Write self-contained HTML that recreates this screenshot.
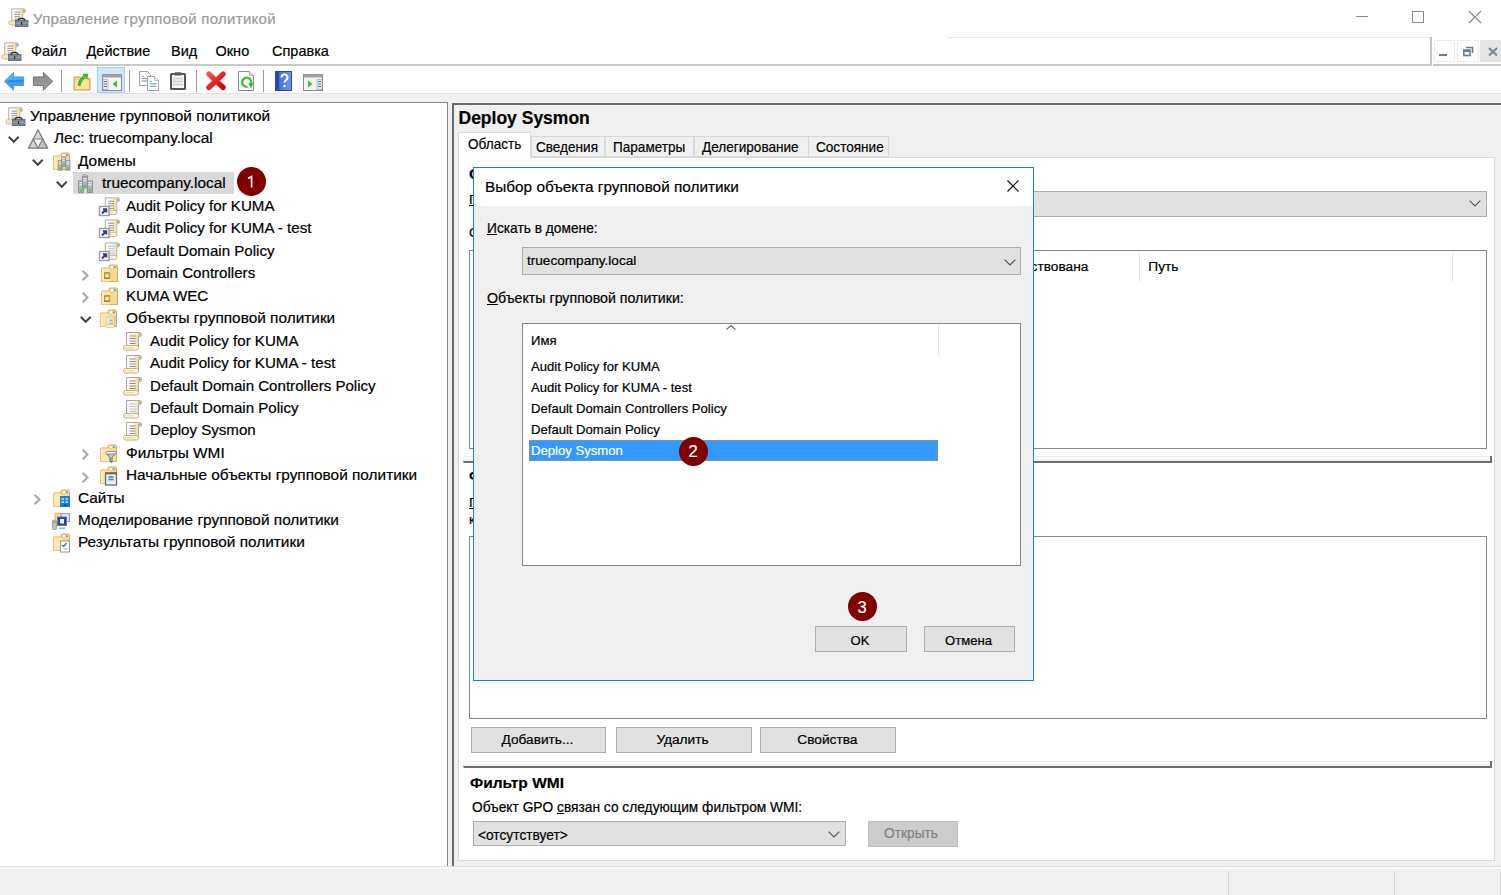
<!DOCTYPE html>
<html><head><meta charset="utf-8">
<style>
*{box-sizing:border-box;margin:0;padding:0}
html,body{width:1501px;height:895px;overflow:hidden;background:#f0f0f0;font-family:"Liberation Sans",sans-serif;color:#000}
.a{position:absolute}
.t{position:absolute;white-space:nowrap;line-height:1;-webkit-text-stroke:0.2px currentColor}
svg{position:absolute;overflow:visible}
</style></head><body>
<div class="a" style="left:0px;top:0px;width:1501px;height:37px;background:#fff;"></div>
<svg style="left:8px;top:8px" width="20" height="20" viewBox="0 0 20 20"><g transform="translate(0.5 -0.5) scale(0.92)"><path d="M3.5 1.5h13a2 2 0 0 1 0 4h-1v10.5h-12z" fill="#fffbea" stroke="#a8a8a8" stroke-width="1"/><rect x="11.5" y="2.5" width="3.5" height="13" fill="#f3df9a" opacity="0.8"/><circle cx="16.5" cy="3.5" r="1.6" fill="#c9b173"/><path d="M6.5 5h6M6.5 7.5h6M6.5 10h6M6.5 12.5h6" stroke="#8886a8" stroke-width="1"/><rect x="0.5" y="14.5" width="15" height="4.5" rx="2.2" fill="#fffbea" stroke="#c3ad72" stroke-width="1"/><rect x="2" y="16" width="9" height="1.5" fill="#f3df9a"/></g><rect x="7.5" y="12.3" width="12.5" height="6.3" fill="#7a8594" stroke="#5c6470" stroke-width="0.8"/><path d="M10 12.6a3.5 2.2 0 0 1 7 0" fill="none" stroke="#2a2a2a" stroke-width="1.1"/><path d="M8.5 15.3h11" stroke="#a9b1bb" stroke-width="0.9"/><rect x="13" y="14.3" width="1.2" height="2.5" fill="#222"/></svg>
<div class="t" style="left:33.00px;top:10.50px;font-size:15px;color:#9a9a9a;letter-spacing:0.3px;">Управление групповой политикой</div>
<div class="a" style="left:1356px;top:16px;width:12px;height:1px;background:#8a8a8a;"></div>
<div class="a" style="left:1412px;top:11px;width:12px;height:12px;border:1px solid #8a8a8a;"></div>
<svg style="left:1469px;top:11px" width="12" height="12" viewBox="0 0 12 12"><path d="M0 0L12 12M12 0L0 12" stroke="#8a8a8a" stroke-width="1.1"/></svg>
<div class="a" style="left:0px;top:37px;width:1501px;height:28px;background:#fff;"></div>
<div class="a" style="left:947px;top:37px;width:485px;height:1px;background:#e6e6e6;"></div>
<div class="a" style="left:0px;top:64px;width:1432px;height:1.5px;background:#c9c9c9;"></div>
<div class="a" style="left:1430px;top:37px;width:1.5px;height:28px;background:#c3c3c3;"></div>
<div class="a" style="left:1433px;top:64px;width:68px;height:1.5px;background:#c9c9c9;"></div>
<svg style="left:1px;top:42px" width="20" height="20" viewBox="0 0 20 20"><g transform="translate(0.5 -0.5) scale(0.92)"><path d="M3.5 1.5h13a2 2 0 0 1 0 4h-1v10.5h-12z" fill="#fffbea" stroke="#a8a8a8" stroke-width="1"/><rect x="11.5" y="2.5" width="3.5" height="13" fill="#f3df9a" opacity="0.8"/><circle cx="16.5" cy="3.5" r="1.6" fill="#c9b173"/><path d="M6.5 5h6M6.5 7.5h6M6.5 10h6M6.5 12.5h6" stroke="#8886a8" stroke-width="1"/><rect x="0.5" y="14.5" width="15" height="4.5" rx="2.2" fill="#fffbea" stroke="#c3ad72" stroke-width="1"/><rect x="2" y="16" width="9" height="1.5" fill="#f3df9a"/></g><rect x="7.5" y="12.3" width="12.5" height="6.3" fill="#7a8594" stroke="#5c6470" stroke-width="0.8"/><path d="M10 12.6a3.5 2.2 0 0 1 7 0" fill="none" stroke="#2a2a2a" stroke-width="1.1"/><path d="M8.5 15.3h11" stroke="#a9b1bb" stroke-width="0.9"/><rect x="13" y="14.3" width="1.2" height="2.5" fill="#222"/></svg>
<div class="t" style="left:31.00px;top:43.73px;font-size:14.5px;">Файл</div>
<div class="t" style="left:86.50px;top:43.73px;font-size:14.5px;">Действие</div>
<div class="t" style="left:171.00px;top:43.73px;font-size:14.5px;">Вид</div>
<div class="t" style="left:215.50px;top:43.73px;font-size:14.5px;">Окно</div>
<div class="t" style="left:272.00px;top:43.73px;font-size:14.5px;">Справка</div>
<div class="a" style="left:1433.5px;top:40px;width:21px;height:21.5px;background:#fff;border:1px solid #ececec;"></div>
<div class="a" style="left:1439px;top:53.5px;width:7.5px;height:2px;background:#6e7d8c;"></div>
<div class="a" style="left:1457px;top:40px;width:21.5px;height:21.5px;background:#fff;border:1px solid #ececec;"></div>
<svg style="left:1463px;top:46px" width="11" height="11" viewBox="0 0 11 11"><path d="M3 1.5H9.5V7" fill="none" stroke="#6e7d8c" stroke-width="1.6"/><rect x="0.8" y="4" width="6.2" height="5.5" fill="none" stroke="#6e7d8c" stroke-width="1.6"/><rect x="0.8" y="4" width="6.2" height="2" fill="#6e7d8c"/></svg>
<div class="a" style="left:1480px;top:40px;width:22px;height:21.5px;background:#e5e5e5;"></div>
<svg style="left:1487.5px;top:47px" width="10" height="9.5" viewBox="0 0 10 9.5"><path d="M1 1L9 8.5M9 1L1 8.5" stroke="#7d8a98" stroke-width="2.2"/></svg>
<div class="a" style="left:0px;top:66px;width:1501px;height:27px;background:#fff;"></div>
<div class="a" style="left:0px;top:93px;width:1501px;height:9px;background:#f0f0f0;border:none;border-top:1px solid #e4e4e4"></div>
<svg style="left:4px;top:72px" width="20" height="18" viewBox="0 0 20 18"><defs><linearGradient id="gb" x1="0" y1="0" x2="0" y2="1"><stop offset="0" stop-color="#5cc0ff"/><stop offset="1" stop-color="#2a90e8"/></linearGradient></defs><path d="M0.4 9.2L9.6 0.4V4.9H19.6V13.5H9.6V18.2z" fill="url(#gb)" stroke="#3a8ad8" stroke-width="0.8"/><path d="M3 9.2h16" stroke="#0b6fd6" stroke-width="2" opacity="0.5"/></svg>
<svg style="left:33px;top:72px" width="20" height="18" viewBox="0 0 20 18"><defs><linearGradient id="gg" x1="0" y1="0" x2="0" y2="1"><stop offset="0" stop-color="#8a8a8a"/><stop offset="1" stop-color="#9c9c9c"/></linearGradient></defs><path d="M19.6 9.2L10.4 0.4V4.9H0.4V13.5H10.4V18.2z" fill="url(#gg)" stroke="#6a6a6a" stroke-width="0.9"/></svg>
<div class="a" style="left:61px;top:69.5px;width:1.2px;height:22.5px;background:#9a9a9a;"></div>
<div class="a" style="left:128.5px;top:69.5px;width:1.2px;height:22.5px;background:#9a9a9a;"></div>
<div class="a" style="left:196px;top:69.5px;width:1.2px;height:22.5px;background:#9a9a9a;"></div>
<div class="a" style="left:263px;top:69.5px;width:1.2px;height:22.5px;background:#9a9a9a;"></div>
<svg style="left:73px;top:71px" width="18" height="20" viewBox="0 0 18 20"><path d="M1 6h6l1.5 1.5H17V19H1z" fill="#f3d27e" stroke="#c9a24c" stroke-width="1"/><path d="M2 9h14v9H2z" fill="#f8e3a4"/><path d="M5 14C6 9 8 6 11 4.5l-1-1.5h5l-1 4.5-1.2-1.5C10 8 8 11 7 15z" fill="#3bbf2e" stroke="#2a9a20" stroke-width="0.6"/></svg>
<div class="a" style="left:97px;top:67px;width:28px;height:26px;background:#cce8ff;border:1px solid #99d1ff;"></div>
<svg style="left:102px;top:74px" width="20" height="17" viewBox="0 0 20 17"><rect x="0.5" y="0.5" width="19" height="16" fill="#f4f4f4" stroke="#8a8a8a" stroke-width="1"/><rect x="0.5" y="0.5" width="19" height="3" fill="#9ea3a8"/><path d="M1 5.5h5v10H1z" fill="#e8ecf0" stroke="#9a9a9a" stroke-width="0.6"/><path d="M2 7.5h3M2 10h3M2 12.5h3" stroke="#3a78c8" stroke-width="1"/><path d="M15 6.5v7l-4.5-3.5z" fill="#3cbf2f"/></svg>
<svg style="left:139px;top:71px" width="21" height="20" viewBox="0 0 21 20"><path d="M0.5 0.5h8l3 3v11h-11z" fill="#fff" stroke="#a3a3a3" stroke-width="1"/><path d="M2.7 5.2h2M2.7 7.6h6.5M2.7 10h6.5" stroke="#4a86d0" stroke-width="0.9"/><path d="M8.5 5.5h7l4 4v10h-11z" fill="#fff" stroke="#a3a3a3" stroke-width="1"/><path d="M15.5 5.5v4h4" fill="#eee" stroke="#b5b5b5" stroke-width="0.8"/><path d="M10.7 10.3h2M10.7 12.8h7M10.7 15.3h7" stroke="#4a86d0" stroke-width="0.9"/></svg>
<svg style="left:170px;top:72px" width="16" height="18" viewBox="0 0 16 18"><rect x="1" y="2" width="14" height="15" rx="0.6" fill="#f4f4f4" stroke="#555" stroke-width="2"/><rect x="4.5" y="0.3" width="7" height="3.2" rx="0.8" fill="#5a5a5a"/><path d="M3 6.5h10M3 9.5h10M3 12.5h10" stroke="#cfcfcf" stroke-width="1.6"/></svg>
<svg style="left:206px;top:71px" width="20" height="19" viewBox="0 0 20 19"><defs><linearGradient id="gr" x1="0" y1="0" x2="1" y2="1"><stop offset="0" stop-color="#ff4d4d"/><stop offset="1" stop-color="#d00000"/></linearGradient></defs><path d="M2.8 3L17.2 16.5M17.2 3L2.8 16.5" stroke="url(#gr)" stroke-width="5.2" stroke-linecap="round"/></svg>
<svg style="left:238px;top:71px" width="16" height="20" viewBox="0 0 16 20"><path d="M0.5 0.5h11l4 4v15h-15z" fill="#fafafa" stroke="#8e8e8e"/><path d="M11.5 0.5v4h4" fill="#e0e0e0" stroke="#aaa" stroke-width="0.8"/><path d="M9.5 15.8a4.6 4.6 0 1 1 3.2-2.2" fill="none" stroke="#3fc236" stroke-width="2.3"/><path d="M10.2 12.2l5 0.6-2.2 4.3z" fill="#2fae27"/></svg>
<svg style="left:275px;top:71px" width="17" height="20" viewBox="0 0 17 20"><defs><linearGradient id="gh" x1="0" y1="0" x2="1" y2="0"><stop offset="0" stop-color="#3a66d0"/><stop offset="1" stop-color="#6f98ec"/></linearGradient></defs><rect x="0.5" y="0.5" width="16" height="19" fill="url(#gh)" stroke="#2a4a9a"/><rect x="0.5" y="0.5" width="3.5" height="19" fill="#2448a8"/><path d="M6.5 6.5a3 3 0 1 1 4.5 2.5c-1 0.6-1.5 1.2-1.5 2.6" fill="none" stroke="#fff" stroke-width="1.9"/><circle cx="9.5" cy="15" r="1.2" fill="#fff"/></svg>
<svg style="left:303px;top:74px" width="20" height="17" viewBox="0 0 20 17"><rect x="0.5" y="0.5" width="19" height="16" fill="#f4f4f4" stroke="#8a8a8a" stroke-width="1"/><rect x="0.5" y="0.5" width="19" height="3" fill="#9ea3a8"/><path d="M14 5.5h5v10h-5z" fill="#e8ecf0" stroke="#9a9a9a" stroke-width="0.6"/><path d="M15 7.5h3M15 10h3M15 12.5h3" stroke="#3a78c8" stroke-width="1"/><path d="M5 6.5v7l4.5-3.5z" fill="#3cbf2f"/></svg>
<div class="a" style="left:-1px;top:102px;width:449px;height:766px;background:#fff;border:1px solid #828790;"></div>
<svg style="left:4.5px;top:106.9px" width="20" height="20" viewBox="0 0 20 20"><g transform="translate(0.5 -0.5) scale(0.92)"><path d="M3.5 1.5h13a2 2 0 0 1 0 4h-1v10.5h-12z" fill="#fffbea" stroke="#a8a8a8" stroke-width="1"/><rect x="11.5" y="2.5" width="3.5" height="13" fill="#f3df9a" opacity="0.8"/><circle cx="16.5" cy="3.5" r="1.6" fill="#c9b173"/><path d="M6.5 5h6M6.5 7.5h6M6.5 10h6M6.5 12.5h6" stroke="#8886a8" stroke-width="1"/><rect x="0.5" y="14.5" width="15" height="4.5" rx="2.2" fill="#fffbea" stroke="#c3ad72" stroke-width="1"/><rect x="2" y="16" width="9" height="1.5" fill="#f3df9a"/></g><rect x="7.5" y="12.3" width="12.5" height="6.3" fill="#7a8594" stroke="#5c6470" stroke-width="0.8"/><path d="M10 12.6a3.5 2.2 0 0 1 7 0" fill="none" stroke="#2a2a2a" stroke-width="1.1"/><path d="M8.5 15.3h11" stroke="#a9b1bb" stroke-width="0.9"/><rect x="13" y="14.3" width="1.2" height="2.5" fill="#222"/></svg>
<div class="t" style="left:30.00px;top:107.86px;font-size:15.4px;">Управление групповой политикой</div>
<svg style="left:8px;top:136.04999999999998px" width="12" height="7" viewBox="0 0 12 7"><path d="M0.8 0.8L5.75 5.75L10.7 0.8" fill="none" stroke="#444" stroke-width="2"/></svg>
<svg style="left:28px;top:129.35px" width="20" height="20" viewBox="0 0 20 20"><defs><linearGradient id="gf" x1="0" y1="0" x2="1" y2="1"><stop offset="0" stop-color="#f2f2f2"/><stop offset="1" stop-color="#b5b5b5"/></linearGradient></defs><path d="M10 0.8L19.5 19.2H0.5z" fill="url(#gf)" stroke="#7c7c7c" stroke-width="1.3"/><path d="M5.25 10h9.5L10 19.2z" fill="#f7f7f7" stroke="#7c7c7c" stroke-width="1.2"/></svg>
<div class="t" style="left:54.00px;top:130.31px;font-size:15.4px;">Лес: truecompany.local</div>
<svg style="left:32px;top:158.5px" width="12" height="7" viewBox="0 0 12 7"><path d="M0.8 0.8L5.75 5.75L10.7 0.8" fill="none" stroke="#444" stroke-width="2"/></svg>
<svg style="left:52px;top:151.8px" width="20" height="20" viewBox="0 0 20 20"><path d="M9 4V2.5a1.5 1.5 0 0 1 1.5-1.5h5.5a1.5 1.5 0 0 1 1.5 1.5V17.5H1.5V5a1 1 0 0 1 1-1z" fill="#f3d68a" stroke="#d2ad5c" stroke-width="1"/><rect x="10.5" y="2.2" width="5.8" height="1.8" rx="0.9" fill="#fff"/><ellipse cx="14.8" cy="3.1" rx="1.4" ry="0.9" fill="#4a90e2"/><path d="M10.5 5.5h6.5v11.5h-6.5z" fill="#f8db8e"/><path d="M2 4.5h7l1 1.5v11.5H2z" fill="#fbe7ad"/><path d="M2.2 5v12" stroke="#fff3cf" stroke-width="0.9"/><g transform="translate(4 2.5) scale(0.85)"><rect x="2.5" y="7" width="5" height="11.5" fill="#aeb4ba" stroke="#7f878f" stroke-width="0.8"/><rect x="3.3" y="8" width="3.4" height="1.2" fill="#e9ecef"/><rect x="3.3" y="10.2" width="3.4" height="1.2" fill="#e9ecef"/><rect x="4.0" y="15.5" width="2.2" height="2" fill="#35d12f"/><rect x="6.5" y="3" width="5" height="11" fill="#aeb4ba" stroke="#7f878f" stroke-width="0.8"/><rect x="7.3" y="4" width="3.4" height="1.2" fill="#e9ecef"/><rect x="7.3" y="6.2" width="3.4" height="1.2" fill="#e9ecef"/><rect x="8.0" y="11" width="2.2" height="2" fill="#35d12f"/><rect x="11.5" y="7" width="5" height="11.5" fill="#aeb4ba" stroke="#7f878f" stroke-width="0.8"/><rect x="12.3" y="8" width="3.4" height="1.2" fill="#e9ecef"/><rect x="12.3" y="10.2" width="3.4" height="1.2" fill="#e9ecef"/><rect x="13.0" y="15.5" width="2.2" height="2" fill="#35d12f"/></g></svg>
<div class="t" style="left:78.00px;top:152.76px;font-size:15.4px;">Домены</div>
<div class="a" style="left:73px;top:172px;width:160.5px;height:22px;background:#d9d9d9;"></div>
<svg style="left:56px;top:180.95px" width="12" height="7" viewBox="0 0 12 7"><path d="M0.8 0.8L5.75 5.75L10.7 0.8" fill="none" stroke="#444" stroke-width="2"/></svg>
<svg style="left:76px;top:174.25px" width="20" height="20" viewBox="0 0 20 20"><g transform="translate(0 0)"><rect x="2.5" y="7" width="5" height="11.5" fill="#aeb4ba" stroke="#7f878f" stroke-width="0.8"/><rect x="3.3" y="8" width="3.4" height="1.2" fill="#e9ecef"/><rect x="3.3" y="10.2" width="3.4" height="1.2" fill="#e9ecef"/><rect x="4.0" y="15.5" width="2.2" height="2" fill="#35d12f"/><rect x="6.5" y="3" width="5" height="11" fill="#aeb4ba" stroke="#7f878f" stroke-width="0.8"/><rect x="7.3" y="4" width="3.4" height="1.2" fill="#e9ecef"/><rect x="7.3" y="6.2" width="3.4" height="1.2" fill="#e9ecef"/><rect x="8.0" y="11" width="2.2" height="2" fill="#35d12f"/><rect x="11.5" y="7" width="5" height="11.5" fill="#aeb4ba" stroke="#7f878f" stroke-width="0.8"/><rect x="12.3" y="8" width="3.4" height="1.2" fill="#e9ecef"/><rect x="12.3" y="10.2" width="3.4" height="1.2" fill="#e9ecef"/><rect x="13.0" y="15.5" width="2.2" height="2" fill="#35d12f"/></g><path d="M7 0.8h4l1 1.7h-6z" fill="#ccd3da" stroke="#7f878f" stroke-width="0.6"/></svg>
<div class="t" style="left:102.00px;top:175.21px;font-size:15.4px;">truecompany.local</div>
<svg style="left:99px;top:196.7px" width="20" height="20" viewBox="0 0 20 20"><g transform="translate(3 -0.5) scale(0.95)"><path d="M3.5 1.5h13a2 2 0 0 1 0 4h-1v10.5h-12z" fill="#fffbea" stroke="#a8a8a8" stroke-width="1"/><rect x="11.5" y="2.5" width="3.5" height="13" fill="#f3df9a" opacity="0.8"/><circle cx="16.5" cy="3.5" r="1.6" fill="#c9b173"/><path d="M6.5 5h6M6.5 7.5h6M6.5 10h6M6.5 12.5h6" stroke="#8886a8" stroke-width="1"/><rect x="0.5" y="14.5" width="15" height="4.5" rx="2.2" fill="#fffbea" stroke="#c3ad72" stroke-width="1"/><rect x="2" y="16" width="9" height="1.5" fill="#f3df9a"/></g><rect x="0.5" y="9.5" width="9.5" height="9" fill="#fff" stroke="#9c9c9c" stroke-width="1.4"/><path d="M3 16.5l4-4M4 12.2h3.3v3.3" fill="none" stroke="#3737a0" stroke-width="2"/></svg>
<div class="t" style="left:126.00px;top:197.92px;font-size:15.1px;">Audit Policy for KUMA</div>
<svg style="left:99px;top:219.15px" width="20" height="20" viewBox="0 0 20 20"><g transform="translate(3 -0.5) scale(0.95)"><path d="M3.5 1.5h13a2 2 0 0 1 0 4h-1v10.5h-12z" fill="#fffbea" stroke="#a8a8a8" stroke-width="1"/><rect x="11.5" y="2.5" width="3.5" height="13" fill="#f3df9a" opacity="0.8"/><circle cx="16.5" cy="3.5" r="1.6" fill="#c9b173"/><path d="M6.5 5h6M6.5 7.5h6M6.5 10h6M6.5 12.5h6" stroke="#8886a8" stroke-width="1"/><rect x="0.5" y="14.5" width="15" height="4.5" rx="2.2" fill="#fffbea" stroke="#c3ad72" stroke-width="1"/><rect x="2" y="16" width="9" height="1.5" fill="#f3df9a"/></g><rect x="0.5" y="9.5" width="9.5" height="9" fill="#fff" stroke="#9c9c9c" stroke-width="1.4"/><path d="M3 16.5l4-4M4 12.2h3.3v3.3" fill="none" stroke="#3737a0" stroke-width="2"/></svg>
<div class="t" style="left:126.00px;top:220.37px;font-size:15.1px;">Audit Policy for KUMA - test</div>
<svg style="left:99px;top:241.6px" width="20" height="20" viewBox="0 0 20 20"><g transform="translate(3 -0.5) scale(0.95)"><path d="M3.5 1.5h13a2 2 0 0 1 0 4h-1v10.5h-12z" fill="#f9f9f4" stroke="#a8a8a8" stroke-width="1"/><rect x="11.5" y="2.5" width="3.5" height="13" fill="#e6e2d2" opacity="0.8"/><circle cx="16.5" cy="3.5" r="1.6" fill="#c9b173"/><path d="M6.5 5h6M6.5 7.5h6M6.5 10h6M6.5 12.5h6" stroke="#bdbdc8" stroke-width="1"/><rect x="0.5" y="14.5" width="15" height="4.5" rx="2.2" fill="#f9f9f4" stroke="#c3ad72" stroke-width="1"/><rect x="2" y="16" width="9" height="1.5" fill="#e6e2d2"/></g><rect x="0.5" y="9.5" width="9.5" height="9" fill="#fff" stroke="#9c9c9c" stroke-width="1.4"/><path d="M3 16.5l4-4M4 12.2h3.3v3.3" fill="none" stroke="#3737a0" stroke-width="2"/></svg>
<div class="t" style="left:126.00px;top:242.82px;font-size:15.1px;">Default Domain Policy</div>
<svg style="left:81.7px;top:269.85px" width="7" height="11" viewBox="0 0 7 11"><path d="M0.6 0.8L5.5 5.5L0.6 10.2" fill="none" stroke="#a6a6a6" stroke-width="2"/></svg>
<svg style="left:100px;top:264.05px" width="20" height="20" viewBox="0 0 20 20"><path d="M9 4V2.5a1.5 1.5 0 0 1 1.5-1.5h5.5a1.5 1.5 0 0 1 1.5 1.5V17.5H1.5V5a1 1 0 0 1 1-1z" fill="#f3d68a" stroke="#d2ad5c" stroke-width="1"/><rect x="10.5" y="2.2" width="5.8" height="1.8" rx="0.9" fill="#fff"/><ellipse cx="14.8" cy="3.1" rx="1.4" ry="0.9" fill="#4a90e2"/><path d="M10.5 5.5h6.5v11.5h-6.5z" fill="#f8db8e"/><path d="M2 4.5h7l1 1.5v11.5H2z" fill="#fbe7ad"/><path d="M2.2 5v12" stroke="#fff3cf" stroke-width="0.9"/><rect x="4" y="8.3" width="6.2" height="6.7" rx="0.6" fill="#a88420"/><rect x="4.8" y="9.6" width="4.6" height="3.8" fill="#e8d77f"/><path d="M7 10.2l1.6 2.5h-3.2z" fill="#f7f0b0"/></svg>
<div class="t" style="left:126.00px;top:265.27px;font-size:15.1px;">Domain Controllers</div>
<svg style="left:81.7px;top:292.3px" width="7" height="11" viewBox="0 0 7 11"><path d="M0.6 0.8L5.5 5.5L0.6 10.2" fill="none" stroke="#a6a6a6" stroke-width="2"/></svg>
<svg style="left:100px;top:286.5px" width="20" height="20" viewBox="0 0 20 20"><path d="M9 4V2.5a1.5 1.5 0 0 1 1.5-1.5h5.5a1.5 1.5 0 0 1 1.5 1.5V17.5H1.5V5a1 1 0 0 1 1-1z" fill="#f3d68a" stroke="#d2ad5c" stroke-width="1"/><rect x="10.5" y="2.2" width="5.8" height="1.8" rx="0.9" fill="#fff"/><ellipse cx="14.8" cy="3.1" rx="1.4" ry="0.9" fill="#4a90e2"/><path d="M10.5 5.5h6.5v11.5h-6.5z" fill="#f8db8e"/><path d="M2 4.5h7l1 1.5v11.5H2z" fill="#fbe7ad"/><path d="M2.2 5v12" stroke="#fff3cf" stroke-width="0.9"/><rect x="4" y="8.3" width="6.2" height="6.7" rx="0.6" fill="#a88420"/><rect x="4.8" y="9.6" width="4.6" height="3.8" fill="#e8d77f"/><path d="M7 10.2l1.6 2.5h-3.2z" fill="#f7f0b0"/></svg>
<div class="t" style="left:126.00px;top:287.72px;font-size:15.1px;">KUMA WEC</div>
<svg style="left:79.5px;top:315.65px" width="12" height="7" viewBox="0 0 12 7"><path d="M0.8 0.8L5.75 5.75L10.7 0.8" fill="none" stroke="#444" stroke-width="2"/></svg>
<svg style="left:99px;top:308.95px" width="20" height="20" viewBox="0 0 20 20"><path d="M9 4V2.5a1.5 1.5 0 0 1 1.5-1.5h5.5a1.5 1.5 0 0 1 1.5 1.5V17.5H1.5V5a1 1 0 0 1 1-1z" fill="#f3d68a" stroke="#d2ad5c" stroke-width="1"/><rect x="10.5" y="2.2" width="5.8" height="1.8" rx="0.9" fill="#fff"/><ellipse cx="14.8" cy="3.1" rx="1.4" ry="0.9" fill="#4a90e2"/><path d="M10.5 5.5h6.5v11.5h-6.5z" fill="#f8db8e"/><path d="M2 4.5h7l1 1.5v11.5H2z" fill="#fbe7ad"/><path d="M2.2 5v12" stroke="#fff3cf" stroke-width="0.9"/><g transform="translate(6 7) scale(0.6)"><path d="M3.5 1.5h13a2 2 0 0 1 0 4h-1v10.5h-12z" fill="#fffbea" stroke="#a8a8a8" stroke-width="1"/><rect x="11.5" y="2.5" width="3.5" height="13" fill="#f3df9a" opacity="0.8"/><circle cx="16.5" cy="3.5" r="1.6" fill="#c9b173"/><path d="M6.5 5h6M6.5 7.5h6M6.5 10h6M6.5 12.5h6" stroke="#8886a8" stroke-width="1"/><rect x="0.5" y="14.5" width="15" height="4.5" rx="2.2" fill="#fffbea" stroke="#c3ad72" stroke-width="1"/><rect x="2" y="16" width="9" height="1.5" fill="#f3df9a"/></g></svg>
<div class="t" style="left:126.00px;top:309.91px;font-size:15.4px;">Объекты групповой политики</div>
<svg style="left:123px;top:331.4px" width="20" height="20" viewBox="0 0 20 20"><g transform="translate(0 0) scale(1.0)"><path d="M3.5 1.5h13a2 2 0 0 1 0 4h-1v10.5h-12z" fill="#fffbea" stroke="#a8a8a8" stroke-width="1"/><rect x="11.5" y="2.5" width="3.5" height="13" fill="#f3df9a" opacity="0.8"/><circle cx="16.5" cy="3.5" r="1.6" fill="#c9b173"/><path d="M6.5 5h6M6.5 7.5h6M6.5 10h6M6.5 12.5h6" stroke="#8886a8" stroke-width="1"/><rect x="0.5" y="14.5" width="15" height="4.5" rx="2.2" fill="#fffbea" stroke="#c3ad72" stroke-width="1"/><rect x="2" y="16" width="9" height="1.5" fill="#f3df9a"/></g></svg>
<div class="t" style="left:150.00px;top:332.62px;font-size:15.1px;">Audit Policy for KUMA</div>
<svg style="left:123px;top:353.85px" width="20" height="20" viewBox="0 0 20 20"><g transform="translate(0 0) scale(1.0)"><path d="M3.5 1.5h13a2 2 0 0 1 0 4h-1v10.5h-12z" fill="#fffbea" stroke="#a8a8a8" stroke-width="1"/><rect x="11.5" y="2.5" width="3.5" height="13" fill="#f3df9a" opacity="0.8"/><circle cx="16.5" cy="3.5" r="1.6" fill="#c9b173"/><path d="M6.5 5h6M6.5 7.5h6M6.5 10h6M6.5 12.5h6" stroke="#8886a8" stroke-width="1"/><rect x="0.5" y="14.5" width="15" height="4.5" rx="2.2" fill="#fffbea" stroke="#c3ad72" stroke-width="1"/><rect x="2" y="16" width="9" height="1.5" fill="#f3df9a"/></g></svg>
<div class="t" style="left:150.00px;top:355.07px;font-size:15.1px;">Audit Policy for KUMA - test</div>
<svg style="left:123px;top:376.29999999999995px" width="20" height="20" viewBox="0 0 20 20"><g transform="translate(0 0) scale(1.0)"><path d="M3.5 1.5h13a2 2 0 0 1 0 4h-1v10.5h-12z" fill="#fffbea" stroke="#a8a8a8" stroke-width="1"/><rect x="11.5" y="2.5" width="3.5" height="13" fill="#f3df9a" opacity="0.8"/><circle cx="16.5" cy="3.5" r="1.6" fill="#c9b173"/><path d="M6.5 5h6M6.5 7.5h6M6.5 10h6M6.5 12.5h6" stroke="#8886a8" stroke-width="1"/><rect x="0.5" y="14.5" width="15" height="4.5" rx="2.2" fill="#fffbea" stroke="#c3ad72" stroke-width="1"/><rect x="2" y="16" width="9" height="1.5" fill="#f3df9a"/></g></svg>
<div class="t" style="left:150.00px;top:377.52px;font-size:15.1px;">Default Domain Controllers Policy</div>
<svg style="left:123px;top:398.75px" width="20" height="20" viewBox="0 0 20 20"><g transform="translate(0 0) scale(1.0)"><path d="M3.5 1.5h13a2 2 0 0 1 0 4h-1v10.5h-12z" fill="#f9f9f4" stroke="#a8a8a8" stroke-width="1"/><rect x="11.5" y="2.5" width="3.5" height="13" fill="#e6e2d2" opacity="0.8"/><circle cx="16.5" cy="3.5" r="1.6" fill="#c9b173"/><path d="M6.5 5h6M6.5 7.5h6M6.5 10h6M6.5 12.5h6" stroke="#bdbdc8" stroke-width="1"/><rect x="0.5" y="14.5" width="15" height="4.5" rx="2.2" fill="#f9f9f4" stroke="#c3ad72" stroke-width="1"/><rect x="2" y="16" width="9" height="1.5" fill="#e6e2d2"/></g></svg>
<div class="t" style="left:150.00px;top:399.97px;font-size:15.1px;">Default Domain Policy</div>
<svg style="left:123px;top:421.20000000000005px" width="20" height="20" viewBox="0 0 20 20"><g transform="translate(0 0) scale(1.0)"><path d="M3.5 1.5h13a2 2 0 0 1 0 4h-1v10.5h-12z" fill="#fffbea" stroke="#a8a8a8" stroke-width="1"/><rect x="11.5" y="2.5" width="3.5" height="13" fill="#f3df9a" opacity="0.8"/><circle cx="16.5" cy="3.5" r="1.6" fill="#c9b173"/><path d="M6.5 5h6M6.5 7.5h6M6.5 10h6M6.5 12.5h6" stroke="#8886a8" stroke-width="1"/><rect x="0.5" y="14.5" width="15" height="4.5" rx="2.2" fill="#fffbea" stroke="#c3ad72" stroke-width="1"/><rect x="2" y="16" width="9" height="1.5" fill="#f3df9a"/></g></svg>
<div class="t" style="left:150.00px;top:422.42px;font-size:15.1px;">Deploy Sysmon</div>
<svg style="left:81.7px;top:449.45px" width="7" height="11" viewBox="0 0 7 11"><path d="M0.6 0.8L5.5 5.5L0.6 10.2" fill="none" stroke="#a6a6a6" stroke-width="2"/></svg>
<svg style="left:99px;top:443.65px" width="20" height="20" viewBox="0 0 20 20"><path d="M9 4V2.5a1.5 1.5 0 0 1 1.5-1.5h5.5a1.5 1.5 0 0 1 1.5 1.5V17.5H1.5V5a1 1 0 0 1 1-1z" fill="#f3d68a" stroke="#d2ad5c" stroke-width="1"/><rect x="10.5" y="2.2" width="5.8" height="1.8" rx="0.9" fill="#fff"/><ellipse cx="14.8" cy="3.1" rx="1.4" ry="0.9" fill="#4a90e2"/><path d="M10.5 5.5h6.5v11.5h-6.5z" fill="#f8db8e"/><path d="M2 4.5h7l1 1.5v11.5H2z" fill="#fbe7ad"/><path d="M2.2 5v12" stroke="#fff3cf" stroke-width="0.9"/><path d="M7 9h10l-4 4.5v5l-2-1v-4z" fill="#b9c7d6" stroke="#5d7086" stroke-width="1"/><rect x="7" y="7.5" width="10" height="2.5" rx="1" fill="#f4f4f4" stroke="#8a8a8a" stroke-width="0.8"/></svg>
<div class="t" style="left:126.00px;top:444.61px;font-size:15.4px;">Фильтры WMI</div>
<svg style="left:81.7px;top:471.90000000000003px" width="7" height="11" viewBox="0 0 7 11"><path d="M0.6 0.8L5.5 5.5L0.6 10.2" fill="none" stroke="#a6a6a6" stroke-width="2"/></svg>
<svg style="left:99px;top:466.1px" width="20" height="20" viewBox="0 0 20 20"><path d="M9 4V2.5a1.5 1.5 0 0 1 1.5-1.5h5.5a1.5 1.5 0 0 1 1.5 1.5V17.5H1.5V5a1 1 0 0 1 1-1z" fill="#f3d68a" stroke="#d2ad5c" stroke-width="1"/><rect x="10.5" y="2.2" width="5.8" height="1.8" rx="0.9" fill="#fff"/><ellipse cx="14.8" cy="3.1" rx="1.4" ry="0.9" fill="#4a90e2"/><path d="M10.5 5.5h6.5v11.5h-6.5z" fill="#f8db8e"/><path d="M2 4.5h7l1 1.5v11.5H2z" fill="#fbe7ad"/><path d="M2.2 5v12" stroke="#fff3cf" stroke-width="0.9"/><rect x="6.5" y="7" width="11" height="12" fill="#e4ecf5" stroke="#5b6470" stroke-width="1.2"/><rect x="6.5" y="6.5" width="11" height="1.8" fill="#8a5a3a"/><path d="M9.5 11h5M9.5 13.5h5" stroke="#3b7fd0" stroke-width="1.4"/></svg>
<div class="t" style="left:126.00px;top:467.06px;font-size:15.4px;">Начальные объекты групповой политики</div>
<svg style="left:34.4px;top:494.34999999999997px" width="7" height="11" viewBox="0 0 7 11"><path d="M0.6 0.8L5.5 5.5L0.6 10.2" fill="none" stroke="#a6a6a6" stroke-width="2"/></svg>
<svg style="left:52px;top:488.54999999999995px" width="20" height="20" viewBox="0 0 20 20"><path d="M9 4V2.5a1.5 1.5 0 0 1 1.5-1.5h5.5a1.5 1.5 0 0 1 1.5 1.5V17.5H1.5V5a1 1 0 0 1 1-1z" fill="#f3d68a" stroke="#d2ad5c" stroke-width="1"/><rect x="10.5" y="2.2" width="5.8" height="1.8" rx="0.9" fill="#fff"/><ellipse cx="14.8" cy="3.1" rx="1.4" ry="0.9" fill="#4a90e2"/><path d="M10.5 5.5h6.5v11.5h-6.5z" fill="#f8db8e"/><path d="M2 4.5h7l1 1.5v11.5H2z" fill="#fbe7ad"/><path d="M2.2 5v12" stroke="#fff3cf" stroke-width="0.9"/><rect x="8" y="7" width="10" height="11" fill="#1f7fe0"/><path d="M9.5 9h2.5v2h-2.5zM13.5 9h2.5v2h-2.5zM9.5 12h2.5v2h-2.5zM13.5 12h2.5v2h-2.5z" fill="#9fd0ff"/><rect x="11.5" y="15.5" width="4" height="1.5" fill="#0b4fa8"/></svg>
<div class="t" style="left:78.00px;top:489.51px;font-size:15.4px;">Сайты</div>
<svg style="left:52px;top:511.0px" width="20" height="20" viewBox="0 0 20 20"><path d="M3 2h6l1 1h3v5h-10z" fill="#f3d98f" stroke="#d6b25e" stroke-width="0.8"/><rect x="0.5" y="9" width="4" height="9.5" rx="1" fill="#bcc2c7" stroke="#8e959b" stroke-width="0.8"/><rect x="1.5" y="10.5" width="2" height="1.3" fill="#3c3"/><rect x="9" y="2.5" width="8.5" height="8" fill="#dfe4ea" stroke="#7d8a99" stroke-width="0.8"/><rect x="5.5" y="6" width="9" height="8.5" fill="#1c3fc8" stroke="#6a7380" stroke-width="0.8"/><rect x="8" y="8" width="4" height="4.5" fill="#f2f2f2"/><path d="M7 16.5h6v1.5h-6z" fill="#a7adb4"/></svg>
<div class="t" style="left:78.00px;top:511.96px;font-size:15.4px;">Моделирование групповой политики</div>
<svg style="left:52px;top:533.45px" width="20" height="20" viewBox="0 0 20 20"><path d="M9 4V2.5a1.5 1.5 0 0 1 1.5-1.5h5.5a1.5 1.5 0 0 1 1.5 1.5V17.5H1.5V5a1 1 0 0 1 1-1z" fill="#f3d68a" stroke="#d2ad5c" stroke-width="1"/><rect x="10.5" y="2.2" width="5.8" height="1.8" rx="0.9" fill="#fff"/><ellipse cx="14.8" cy="3.1" rx="1.4" ry="0.9" fill="#4a90e2"/><path d="M10.5 5.5h6.5v11.5h-6.5z" fill="#f8db8e"/><path d="M2 4.5h7l1 1.5v11.5H2z" fill="#fbe7ad"/><path d="M2.2 5v12" stroke="#fff3cf" stroke-width="0.9"/><rect x="8.5" y="8" width="9" height="11" fill="#fff" stroke="#9a9a9a" stroke-width="1"/><path d="M10 12l1.5 1.5 3-3.5" fill="none" stroke="#2a7fd8" stroke-width="1.5"/><path d="M11.5 16h4" stroke="#8aa" stroke-width="1"/></svg>
<div class="t" style="left:78.00px;top:534.41px;font-size:15.4px;">Результаты групповой политики</div>
<div class="a" style="left:452px;top:102.5px;width:1052px;height:765.5px;background:#f0f0f0;border-left:2px solid #6a6a6a;border-top:2px solid #6a6a6a"></div>
<div class="t" style="left:458.50px;top:110.39px;font-size:17.5px;font-weight:700;">Deploy Sysmon</div>
<div class="a" style="left:458.3px;top:156.5px;width:1036.5px;height:704px;background:#fff;border:1px solid #d9d9d9;"></div>
<div class="a" style="left:458.3px;top:132.3px;width:72.90000000000003px;height:25.5px;background:#fff;border:1px solid #d9d9d9;border-bottom:none"></div>
<div class="t" style="left:467.60px;top:137.24px;font-size:14.6px;transform:scaleX(0.93);transform-origin:0 0;">Область</div>
<div class="a" style="left:530.7px;top:135.7px;width:74.69999999999993px;height:21.3px;background:#f0f0f0;border:1px solid #d9d9d9;"></div>
<div class="t" style="left:535.90px;top:140.24px;font-size:14.6px;transform:scaleX(0.93);transform-origin:0 0;">Сведения</div>
<div class="a" style="left:604.9px;top:135.7px;width:89.10000000000002px;height:21.3px;background:#f0f0f0;border:1px solid #d9d9d9;"></div>
<div class="t" style="left:613.20px;top:140.24px;font-size:14.6px;transform:scaleX(0.93);transform-origin:0 0;">Параметры</div>
<div class="a" style="left:693.5px;top:135.7px;width:115.39999999999998px;height:21.3px;background:#f0f0f0;border:1px solid #d9d9d9;"></div>
<div class="t" style="left:702.00px;top:140.24px;font-size:14.6px;transform:scaleX(0.93);transform-origin:0 0;">Делегирование</div>
<div class="a" style="left:808.4px;top:135.7px;width:81.10000000000002px;height:21.3px;background:#f0f0f0;border:1px solid #d9d9d9;"></div>
<div class="t" style="left:816.30px;top:140.24px;font-size:14.6px;transform:scaleX(0.93);transform-origin:0 0;">Состояние</div>
<div class="t" style="left:469.00px;top:166.18px;font-size:15.5px;font-weight:700;">Связи</div>
<div class="t" style="left:469.00px;top:193.40px;font-size:13.7px;"><u>П</u>оказать связи в этом размещении:</div>
<div class="a" style="left:700px;top:191px;width:786.5px;height:26px;background:#e1e1e1;border:1px solid #adadad;"></div>
<svg style="left:1469px;top:199.5px" width="12" height="7" viewBox="0 0 12 7"><path d="M0.6 0.6L6 6L11.4 0.6" fill="none" stroke="#555" stroke-width="1.2"/></svg>
<div class="t" style="left:469.00px;top:225.90px;font-size:13.7px;">Объекты в этом размещении связаны со следующими объектами:</div>
<div class="a" style="left:469px;top:250px;width:1017.5px;height:199px;background:#fff;border:1px solid #828790;"></div>
<div class="t" style="left:478.00px;top:260.10px;font-size:13.7px;">Размещение</div>
<div class="a" style="left:700px;top:252.5px;width:1px;height:29.5px;background:#e5e5e5;"></div>
<div class="t" style="left:708.00px;top:260.10px;font-size:13.7px;">Принудительный</div>
<div class="a" style="left:890px;top:252.5px;width:1px;height:29.5px;background:#e5e5e5;"></div>
<div class="t" style="left:951.80px;top:260.10px;font-size:13.7px;">Связь задействована</div>
<div class="a" style="left:1139px;top:252.5px;width:1px;height:29.5px;background:#e5e5e5;"></div>
<div class="t" style="left:1148.30px;top:260.10px;font-size:13.7px;">Путь</div>
<div class="a" style="left:1452px;top:252.5px;width:1px;height:29.5px;background:#e5e5e5;"></div>
<div class="a" style="left:463px;top:455.5px;width:1029px;height:7.5px;background:linear-gradient(#e4e4e4,#fdfdfd 30%,#f2f2f2 70%);border-bottom:2px solid #6d6d6d;border-radius:2px 0 0 2px"></div>
<div class="a" style="left:1490px;top:456px;width:2px;height:7px;background:#6f6f6f;"></div>
<div class="t" style="left:469.00px;top:468.73px;font-size:14.5px;font-weight:700;">Фильтрация безопасности</div>
<div class="t" style="left:469.00px;top:496.40px;font-size:13.7px;"><u>П</u>араметры этого объекта групповой политики применяются только</div>
<div class="t" style="left:469.00px;top:512.90px;font-size:13.7px;">к следующим группам, пользователям и компьютерам:</div>
<div class="a" style="left:469px;top:536px;width:1017.5px;height:183px;background:#fff;border:1px solid #828790;"></div>
<div class="a" style="left:470.5px;top:727.3px;width:135.70000000000005px;height:25.5px;background:#e1e1e1;border:1px solid #adadad;"></div>
<div class="t" style="left:501.50px;top:733.40px;font-size:13.7px;">Добавить...</div>
<div class="a" style="left:615.5px;top:727.3px;width:136.0px;height:25.5px;background:#e1e1e1;border:1px solid #adadad;"></div>
<div class="t" style="left:656.40px;top:733.40px;font-size:13.7px;">Удалить</div>
<div class="a" style="left:760.1px;top:727.3px;width:136.29999999999995px;height:25.5px;background:#e1e1e1;border:1px solid #adadad;"></div>
<div class="t" style="left:797.30px;top:733.40px;font-size:13.7px;">Свойства</div>
<div class="a" style="left:463px;top:760.8px;width:1029px;height:7.2px;background:linear-gradient(#e4e4e4,#fdfdfd 30%,#f2f2f2 70%);border-bottom:2px solid #6d6d6d;border-radius:2px 0 0 2px"></div>
<div class="a" style="left:1490px;top:761px;width:2px;height:7px;background:#6f6f6f;"></div>
<div class="t" style="left:470.00px;top:775.48px;font-size:15.5px;font-weight:700;">Фильтр WMI</div>
<div class="t" style="left:472.00px;top:800.96px;font-size:13.75px;">Объект GPO <u>с</u>вязан со следующим фильтром WMI:</div>
<div class="a" style="left:473px;top:821.4px;width:373.3px;height:25px;background:#e1e1e1;border:1px solid #adadad;"></div>
<div class="t" style="left:478.20px;top:827.30px;font-size:15px;transform:scaleX(0.916);transform-origin:0 0;">&lt;отсутствует&gt;</div>
<svg style="left:828px;top:830.5px" width="12" height="7" viewBox="0 0 12 7"><path d="M0.6 0.6L6 6L11.4 0.6" fill="none" stroke="#555" stroke-width="1.2"/></svg>
<div class="a" style="left:868.2px;top:821.4px;width:90.2px;height:25.2px;background:#cccccc;border:1px solid #bfbfbf;"></div>
<div class="t" style="left:884.00px;top:827.36px;font-size:13.75px;color:#838383;">Открыть</div>
<div class="a" style="left:0px;top:866px;width:1501px;height:1px;background:#dedede;"></div>
<div class="a" style="left:0px;top:867px;width:1501px;height:1.5px;background:#fbfbfb;"></div>
<div class="a" style="left:0px;top:868.5px;width:1501px;height:26.5px;background:#f0f0f0;"></div>
<div class="a" style="left:1228px;top:871px;width:1px;height:24px;background:#d6d6d6;"></div>
<div class="a" style="left:1394px;top:871px;width:1px;height:24px;background:#d6d6d6;"></div>
<div class="a" style="left:1500px;top:871px;width:1px;height:24px;background:#d6d6d6;"></div>
<div class="a" style="left:473px;top:167px;width:561px;height:514px;background:#f0f0f0;border:1px solid #1883d7;"></div>
<div class="a" style="left:474px;top:168px;width:559px;height:37.6px;background:#fff;"></div>
<div class="t" style="left:485.00px;top:179.31px;font-size:15.35px;">Выбор объекта групповой политики</div>
<svg style="left:1007px;top:180.3px" width="12" height="12" viewBox="0 0 12 12"><path d="M0.5 0.5L11.5 11.5M11.5 0.5L0.5 11.5" stroke="#111" stroke-width="1.2"/></svg>
<div class="t" style="left:487.00px;top:221.56px;font-size:13.75px;"><u>И</u>скать в домене:</div>
<div class="a" style="left:521.6px;top:247.3px;width:499px;height:27.4px;background:#e1e1e1;border:1px solid #adadad;"></div>
<div class="t" style="left:527.00px;top:253.99px;font-size:13.6px;">truecompany.local</div>
<svg style="left:1003.5px;top:258.8px" width="12" height="7" viewBox="0 0 12 7"><path d="M0.6 0.6L6 6L11.4 0.6" fill="none" stroke="#555" stroke-width="1.2"/></svg>
<div class="t" style="left:487.00px;top:291.28px;font-size:14.2px;"><u>О</u>бъекты групповой политики:</div>
<div class="a" style="left:521.6px;top:322.6px;width:499px;height:243.2px;background:#fff;border:1px solid #828790;"></div>
<svg style="left:726px;top:325.4px" width="11" height="5" viewBox="0 0 11 5"><path d="M0.5 4.5L5 0.5L9.5 4.5" fill="none" stroke="#6a6a6a" stroke-width="1.1"/></svg>
<div class="t" style="left:531.00px;top:333.71px;font-size:13.1px;">Имя</div>
<div class="a" style="left:937.6px;top:325px;width:1px;height:30px;background:#e5e5e5;"></div>
<div class="t" style="left:531.00px;top:359.61px;font-size:13.1px;">Audit Policy for KUMA</div>
<div class="t" style="left:531.00px;top:380.83px;font-size:13.1px;">Audit Policy for KUMA - test</div>
<div class="t" style="left:531.00px;top:402.05px;font-size:13.1px;">Default Domain Controllers Policy</div>
<div class="t" style="left:531.00px;top:423.27px;font-size:13.1px;">Default Domain Policy</div>
<div class="a" style="left:529.2px;top:439.7px;width:409px;height:21.2px;background:#3399ff;outline:1px dotted #d08a40;outline-offset:-1px"></div>
<div class="t" style="left:531.00px;top:444.49px;font-size:13.1px;color:#fff;">Deploy Sysmon</div>
<div class="a" style="left:815.4px;top:626.3px;width:91.20000000000005px;height:25.7px;background:#e1e1e1;border:1px solid #adadad;"></div>
<div class="t" style="left:850.50px;top:633.61px;font-size:13.1px;">OK</div>
<div class="a" style="left:924px;top:626.3px;width:91.39999999999998px;height:25.7px;background:#e1e1e1;border:1px solid #adadad;"></div>
<div class="t" style="left:945.00px;top:633.61px;font-size:13.1px;">Отмена</div>
<div class="a" style="left:236.5px;top:166.60000000000002px;width:29.4px;height:29.4px;border-radius:50%;background:#800000"></div>
<svg style="left:247.2px;top:175.5px" width="8" height="11.5" viewBox="0 0 8 11.5"><path d="M1 2.6L4.6 0.6V11.5" fill="none" stroke="#fff" stroke-width="1.7"/></svg>
<div class="a" style="left:678.5999999999999px;top:436.6px;width:29.4px;height:29.4px;border-radius:50%;background:#800000"></div>
<div class="t" style="left:688.40px;top:443.43px;font-size:16.5px;color:#fff;">2</div>
<div class="a" style="left:847.5999999999999px;top:591.8px;width:29.4px;height:29.4px;border-radius:50%;background:#800000"></div>
<div class="t" style="left:857.40px;top:598.63px;font-size:16.5px;color:#fff;">3</div>
</body></html>
